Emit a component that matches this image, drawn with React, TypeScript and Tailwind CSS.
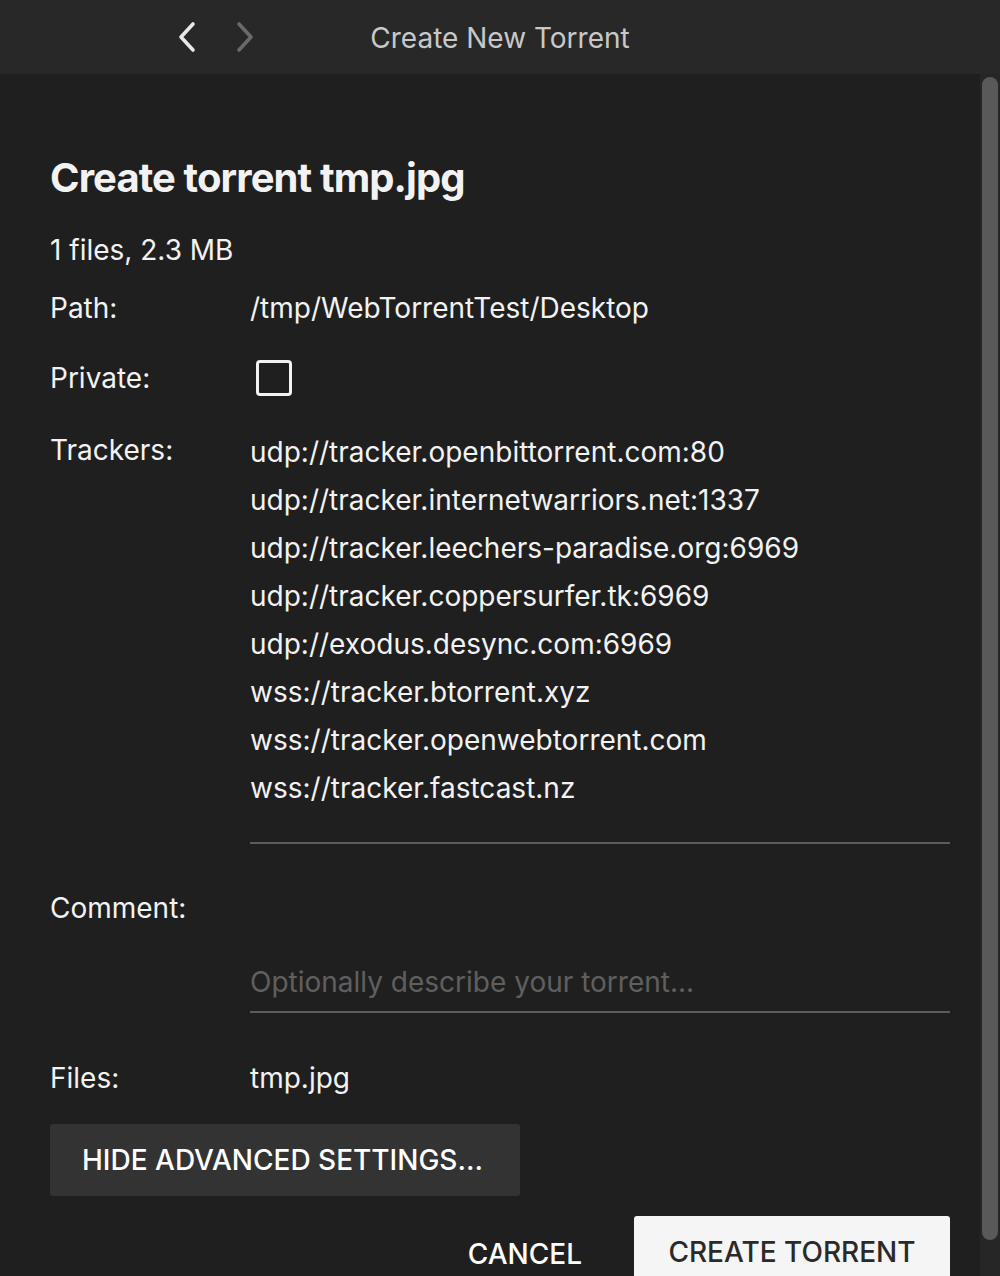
const trackers = [
  'udp://tracker.openbittorrent.com:80',
  'udp://tracker.internetwarriors.net:1337',
  'udp://tracker.leechers-paradise.org:6969',
  'udp://tracker.coppersurfer.tk:6969',
  'udp://exodus.desync.com:6969',
  'wss://tracker.btorrent.xyz',
  'wss://tracker.openwebtorrent.com',
  'wss://tracker.fastcast.nz',
];

const Row = ({ label, children, className = '' }: { label: string; children?: React.ReactNode; className?: string }) => (
  <div className={`flex ${className}`}>
    <div className="w-[200px] shrink-0">{label}</div>
    <div className="flex-1">{children}</div>
  </div>
);

const Chevron = ({ dir, color }: { dir: 'left' | 'right'; color: string }) => (
  <svg width="20" height="32" viewBox="0 0 20 32" className={color}>
    <path
      d={dir === 'left' ? 'M17 3 L5 16 L17 29' : 'M3 3 L15 16 L3 29'}
      fill="none"
      stroke="currentColor"
      strokeWidth="3.6"
      strokeLinecap="round"
      strokeLinejoin="round"
    />
  </svg>
);

const App = () => {
  return (
    <div
      className="w-[1000px] h-[1276px] overflow-hidden bg-[#1f1f1f] flex flex-col text-[#f2f2f2]"
      style={{ fontFamily: 'Inter, "Noto Sans", sans-serif' }}
    >
      <div className="h-[74px] shrink-0 bg-[#282828] grid grid-cols-[1fr_auto_1fr] items-center">
        <div className="flex items-center gap-[40px] pl-[176px]">
          <Chevron dir="left" color="text-[#e8e8e8]" />
          <Chevron dir="right" color="text-[#6a6a6a]" />
        </div>
        <div className="pt-[2px] text-[28px] text-[#c8c8c8]">Create New Torrent</div>
        <div />
      </div>

      <div className="flex-1 flex min-h-0">
        <div className="flex-1 pl-[50px] pr-[30px] text-[28px] leading-[32px]">
          <h1 className="mt-[80px] text-[40px] leading-[48px] font-bold tracking-[-0.9px]">Create torrent tmp.jpg</h1>
          <div className="mt-[32px]">1 files, 2.3 MB</div>
          <Row label="Path:" className="mt-[26px]">/tmp/WebTorrentTest/Desktop</Row>
          <Row label="Private:" className="mt-[36px] items-center h-[36px]">
            <div className="ml-[6px] w-[36px] h-[36px] border-[3px] border-[#f2f2f2] rounded-[4px]" />
          </Row>
          <Row label="Trackers:" className="mt-[38px]">
            <div className="-mt-[6px] border-b-2 border-[#5c5c5c] pb-[30px]">
              {trackers.map((t) => (
                <div key={t} className="leading-[48px]">
                  {t}
                </div>
              ))}
            </div>
          </Row>
          <Row label="Comment:" className="mt-[48px]">
            <div className="mt-[74px] border-b-2 border-[#5c5c5c] pb-[13px] text-[#5f5f5f]">
              Optionally describe your torrent...
            </div>
          </Row>
          <Row label="Files:" className="mt-[49px]">tmp.jpg</Row>
          <button className="mt-[30px] h-[72px] w-[470px] rounded-[3px] bg-[#333333] text-[28px] font-medium uppercase text-white text-left pl-[32px]">
            Hide advanced settings...
          </button>
          <div className="mt-[20px] flex items-start justify-end">
            <button className="mt-[22px] mr-[52px] leading-[32px] text-[28px] font-medium uppercase text-white">
              Cancel
            </button>
            <button className="h-[80px] w-[316px] rounded-t-[3px] bg-[#f5f5f5] pb-[8px] text-[28px] font-medium uppercase text-[#2a2a2a]">
              Create Torrent
            </button>
          </div>
        </div>
        <div className="w-[20px] shrink-0 bg-[#262626] pt-[3px] pl-[2px]">
          <div className="w-[16px] h-[1163px] rounded-full bg-[#595959]" />
        </div>
      </div>
    </div>
  );
};

export default App;
